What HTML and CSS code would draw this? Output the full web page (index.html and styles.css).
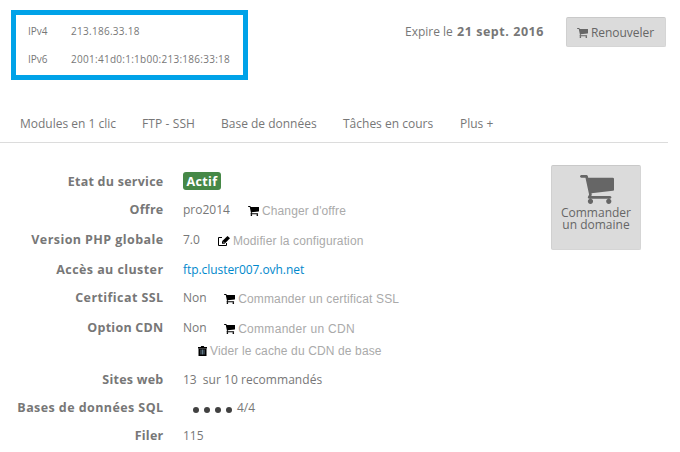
FILE: index.html
```html
<!DOCTYPE html>
<html lang="fr">
<head>
<meta charset="utf-8">
<title>Hébergement</title>
<link rel="stylesheet" href="styles.css">
</head>
<body>
<svg class="defs" width="0" height="0">
  <symbol id="cart" viewBox="0 256 1664 1408" preserveAspectRatio="none"><path d="M640 1536q0 52-38 90t-90 38-90-38-38-90 38-90 90-38 90 38 38 90zm896 0q0 52-38 90t-90 38-90-38-38-90 38-90 90-38 90 38 38 90zm128-1088v512q0 24-16.500 42.500t-40.500 21.500l-1044 122q13 60 13 70 0 16-24 64h920q26 0 45 19t19 45-19 45-45 19h-1024q-26 0-45-19t-19-45q0-11 8-31.500t16-36 21.500-40 15.500-29.500l-177-823h-204q-26 0-45-19t-19-45 19-45 45-19h256q16 0 28.500 6.500t19.500 15.500 13 24.500 8 26 5.500 29.500 4.500 26h1201q26 0 45 19t19 45z"/></symbol>
  <symbol id="edit" viewBox="0 0 12 10"><path d="M4 1.500H.5v8h8V7" fill="none" stroke="currentColor"/><path d="M9.500 0 12 2.300 6.600 7.800H4V5.300z"/><path d="M5 5.600 6.300 6.900" stroke="#fff" stroke-width=".7"/></symbol>
  <symbol id="trash" viewBox="0 0 9 10"><path d="M0 1h2.700L3.200 0h2.600l.5 1H9v1.500H0z"/><path d="M.5 2.500h8V10h-8z"/><path d="M3 3.500v5M4.500 3.500v5M6 3.500v5" stroke="#7c99ac" stroke-width=".8"/></symbol>
</svg>
<header class="top">
  <dl class="ips">
    <dt>IPv4</dt><dd>213.186.33.18</dd>
    <dt>IPv6</dt><dd>2001:41d0:1:1b00:213:186:33:18</dd>
  </dl>
  <p class="expire">Expire le <b>21 sept. 2016</b></p>
  <button class="btn renew"><svg><use href="#cart"/></svg><span>Renouveler</span></button>
</header>
<nav class="tabs">
  <a class="t1">Modules en 1 clic</a><a class="t2">FTP - SSH</a><a class="t3">Base de données</a><a class="t4">Tâches en cours</a><a class="t5">Plus +</a>
</nav>
<main class="content">
  <section class="info">
    <div class="row"><b>Etat du service</b><span class="badge">Actif</span></div>
    <div class="row"><b>Offre</b><span class="val">pro2014</span><a class="action offer"><svg class="cart"><use href="#cart"/></svg><span>Changer d'offre</span></a></div>
    <div class="row tall"><b class="wide">Version PHP globale</b><span class="val">7.0</span><a class="action conf"><svg class="edit"><use href="#edit"/></svg><span>Modifier la configuration</span></a></div>
    <div class="row"><b class="wide">Accès au cluster</b><a class="host">ftp.cluster007.ovh.net</a></div>
    <div class="row"><b class="wide">Certificat SSL</b><span class="val">Non</span><a class="action ssl"><svg class="cart"><use href="#cart"/></svg><span>Commander un certificat SSL</span></a></div>
    <div class="row tall"><b>Option CDN</b><span class="val">Non</span><a class="action cdn"><svg class="cart"><use href="#cart"/></svg><span>Commander un CDN</span></a></div>
    <div class="row sub"><b></b><a class="action purge"><svg class="trash"><use href="#trash"/></svg><span>Vider le cache du CDN de base</span></a></div>
    <div class="row"><b>Sites web</b><span class="val">13</span><span class="sites">sur 10 recommandés</span></div>
    <div class="row"><b class="wide">Bases de données SQL</b><span class="dots"><i></i><i></i><i></i><i></i></span><span>4/4</span></div>
    <div class="row"><b>Filer</b><span class="val">115</span></div>
  </section>
  <button class="btn order"><svg><use href="#cart"/></svg><span>Commander</span><span>un domaine</span></button>
</main>
</body>
</html>
```
FILE: styles.css
```css
* { box-sizing: border-box; }
body {
  margin: 0;
  width: 680px;
  height: 452px;
  overflow: hidden;
  background: #fff;
  color: #777;
  font: 12px/16px "Open Sans", sans-serif;
}
svg { fill: currentColor; flex: none; }
.defs { position: absolute; }
.top { display: flex; align-items: flex-start; height: 105px; padding-top: 10px; }
.ips {
  display: grid;
  grid-template-columns: 43px 1fr;
  grid-auto-rows: 28px;
  align-items: center;
  width: 237px;
  height: 70px;
  margin: 0 0 0 11px;
  padding: 2px 0 0 12px;
  border: 5px solid #00a2e8;
  font-size: 10px;
  white-space: nowrap;
}
.ips dd { margin: 0; letter-spacing: .28px; }
.expire { width: 161px; margin: 14px 0 0 157px; white-space: nowrap; }
.expire b { margin-left: 1px; font-size: 12.5px; letter-spacing: .55px; }
.btn {
  display: flex;
  align-items: center;
  padding: 0;
  border: 1px solid #ccc;
  border-color: #c9c9c9 #d5d5d5 #d5d5d5 #d0d0d0;
  border-radius: 2px;
  background: #dbdbdb;
  color: #666;
  font: inherit;
  white-space: nowrap;
}
.renew { width: 100px; height: 30px; margin-top: 7px; padding: 2px 0 0 10px; gap: 3px; }
.renew svg { width: 11px; height: 10px; }
.renew span { letter-spacing: -.05px; }
.tabs {
  display: flex;
  width: 668px;
  height: 38px;
  padding: 11px 0 0 20px;
  border-bottom: 1px solid #dcdcdc;
  white-space: nowrap;
}
.t1 { width: 122px; }
.t2 { width: 79px; letter-spacing: .1px; }
.t3 { width: 122px; }
.t4 { width: 117px; }
.content { display: flex; padding-top: 25px; }
.info { width: 551px; }
.row { display: flex; align-items: center; height: 28px; white-space: nowrap; }
.row > b { width: 163.5px; margin-right: 19.5px; font-size: 12.5px; letter-spacing: .25px; text-align: right; }
.row > .wide { letter-spacing: .42px; }
.tall { height: 32px; }
.sub { height: 14px; margin-bottom: 8px; }
.badge {
  width: 38px;
  height: 18px;
  margin-top: -2px;
  border-radius: 3px;
  background: #468847;
  color: #fff;
  font-size: 12.5px;
  font-weight: bold;
  letter-spacing: .4px;
  line-height: 19px;
  text-align: center;
}
.action {
  display: flex;
  align-items: center;
  gap: 3px;
  margin-top: 2px;
  color: #aaa;
  font-family: "Liberation Sans", sans-serif;
  letter-spacing: .13px;
}
.action svg { color: #000; }
.cart { width: 11px; height: 10px; }
.edit { width: 12px; height: 10px; }
.trash { width: 9px; height: 10px; }
.offer, .conf { margin-left: 18px; }
.ssl, .cdn { margin-left: 17.5px; }
.ssl { letter-spacing: .16px; }
.cdn { letter-spacing: .3px; }
.sub .action { margin: -1px 0 0 15px; }
.host { color: #0088cc; letter-spacing: -.06px; }
.sites { margin-left: 6px; letter-spacing: .05px; }
.dots { display: flex; gap: 5px; margin: 3px 5px 0 10px; }
.dots i { width: 6px; height: 6px; border-radius: 50%; background: #414141; }
.order {
  flex-direction: column;
  width: 90px;
  height: 85px;
  margin-top: -3px;
  padding-top: 9px;
  line-height: 12px;
}
.order svg { width: 34px; height: 29px; margin: 0 0 3px 1px; }
```
